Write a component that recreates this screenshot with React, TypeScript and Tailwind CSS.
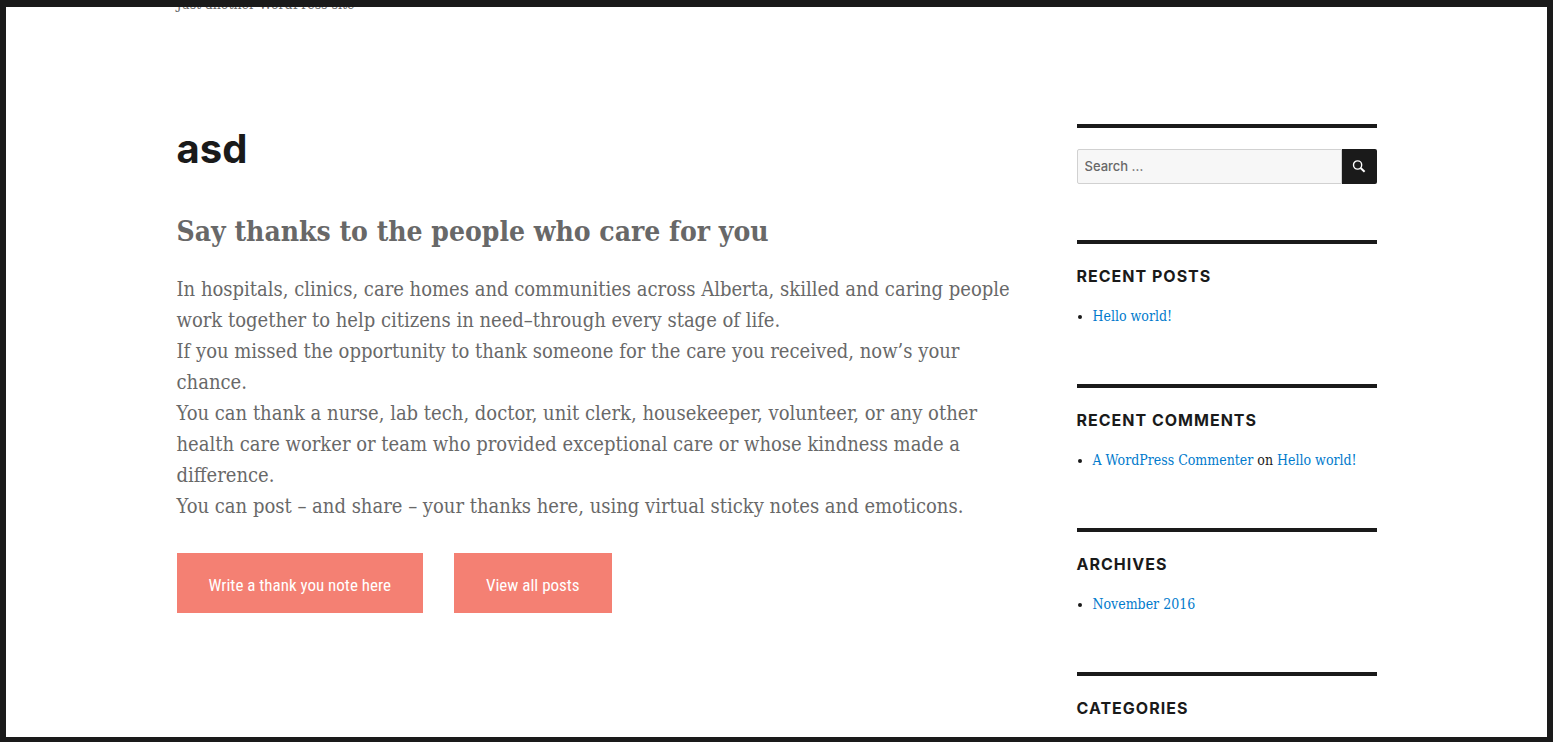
import type { ReactNode } from "react";

const serif = "font-['DejaVu_Serif_Condensed','DejaVu_Serif',serif] [font-stretch:condensed]";

function Widget({ title, children }: { title?: string; children?: ReactNode }) {
  return (
    <section className="mb-14 border-t-4 border-[#1a1a1a] pt-[21px]">
      {title && (
        <h2 className="mb-[17px] font-['Inter',sans-serif] text-[16px] leading-[22px] font-bold tracking-[1px] uppercase">
          {title}
        </h2>
      )}
      {children}
    </section>
  );
}

function TextLink({ children }: { children: ReactNode }) {
  return (
    <a href="#" className="text-[#007acc]">
      {children}
    </a>
  );
}

function ActionLink({ children }: { children: ReactNode }) {
  return (
    <a
      href="#"
      className="flex h-15 items-center bg-[#f48073] px-8 pt-1 font-['Roboto_Condensed','Liberation_Sans_Narrow',sans-serif] text-[17px] leading-6 text-white"
    >
      {children}
    </a>
  );
}

export default function App() {
  return (
    <div className="h-screen overflow-hidden border-x-6 border-t-7 border-b-5 border-[#1a1a1a] bg-white text-[#1a1a1a]">
      <div className="mx-auto max-w-[1200px]">
        <header className="-mt-3 mb-[111px]">
          <p className={`text-[14px] leading-[18px] text-[#686868] ${serif}`}>
            Just another WordPress site
          </p>
        </header>
        <div className="flex justify-between">
          <main className="w-[70%]">
            <h1 className="font-['Inter',sans-serif] text-[40px] leading-[50px] font-bold">asd</h1>
            <div className={`text-[#686868] ${serif}`}>
              <h2 className="mt-[38px] mb-[22px] text-[28px] leading-[40px] font-bold">
                Say thanks to the people who care for you
              </h2>
              <p className="text-[20px] leading-[31px]">
                In hospitals, clinics, care homes and communities across Alberta, skilled and caring people work
                together to help citizens in need–through every stage of life.
                <br />
                If you missed the opportunity to thank someone for the care you received, now’s your chance.
                <br />
                You can thank a nurse, lab tech, doctor, unit clerk, housekeeper, volunteer, or any other health care
                worker or team who provided exceptional care or whose kindness made a difference.
                <br />
                You can post – and share – your thanks here, using virtual sticky notes and emoticons.
              </p>
            </div>
            <div className="mt-[31px] flex gap-[31px]">
              <ActionLink>Write a thank you note here</ActionLink>
              <ActionLink>View all posts</ActionLink>
            </div>
          </main>
          <aside className="w-1/4">
            <Widget>
              <form className="flex h-[35px]" onSubmit={(e) => e.preventDefault()}>
                <input
                  type="search"
                  aria-label="Search for"
                  placeholder="Search …"
                  className="min-w-0 flex-1 rounded-l-xs border border-[#d1d1d1] bg-[#f7f7f7] px-[7px] font-['Inter',sans-serif] text-[13px] font-medium placeholder:text-[#686868]"
                />
                <button
                  type="submit"
                  aria-label="Search"
                  className="flex w-[35px] items-center justify-center rounded-r-xs bg-[#1a1a1a] text-white"
                >
                  <svg width="14" height="14" viewBox="0 0 14 14" fill="none" stroke="currentColor">
                    <circle cx="5.6" cy="5" r="4.1" strokeWidth="1.4" />
                    <path d="M8.6 8 12.6 11.8" strokeWidth="2" />
                  </svg>
                </button>
              </form>
            </Widget>
            <div className={`text-[14px] leading-6 ${serif}`}>
              <Widget title="Recent Posts">
                <ul className="list-disc pl-4">
                  <li>
                    <TextLink>Hello world!</TextLink>
                  </li>
                </ul>
              </Widget>
              <Widget title="Recent Comments">
                <ul className="list-disc pl-4">
                  <li>
                    <TextLink>A WordPress Commenter</TextLink> on <TextLink>Hello world!</TextLink>
                  </li>
                </ul>
              </Widget>
              <Widget title="Archives">
                <ul className="list-disc pl-4">
                  <li>
                    <TextLink>November 2016</TextLink>
                  </li>
                </ul>
              </Widget>
              <Widget title="Categories" />
            </div>
          </aside>
        </div>
      </div>
    </div>
  );
}
